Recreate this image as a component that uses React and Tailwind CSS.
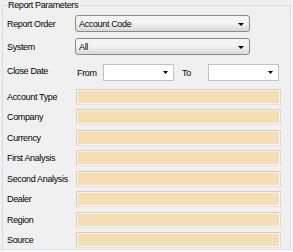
import React from 'react';

const Arrow = ({ w = 5 }) => (
  <svg width={w} height="3" viewBox={`0 0 ${w} 3`} className="shrink-0">
    <path d={`M0 0h${w}L${w / 2} 3z`} fill="#000" />
  </svg>
);

const Combo = ({ value }) => (
  <div className="w-[175px] h-[17px] flex items-center justify-between pl-[3px] pr-[5px] rounded-[3px] border border-[#8a8a8a] bg-gradient-to-b from-[#f4f4f4] from-45% to-[#d8d8d8]">
    <span>{value}</span>
    <div className="mt-[1px]"><Arrow w={6} /></div>
  </div>
);

const DateBox = () => (
  <div className="w-[71px] h-[17px] flex items-center justify-end pr-[5px] bg-white border border-[#c2c2c2]">
    <Arrow />
  </div>
);

const fields = [
  'Account Type',
  'Company',
  'Currency',
  'First Analysis',
  'Second Analysis',
  'Dealer',
  'Region',
  'Source',
];

const App = () => {
  return (
    <div
      className="w-[293px] h-[252px] bg-[#f0f0f0] pl-[2px] text-[9px] leading-[10px] tracking-[-0.35px] text-black"
      style={{ fontFamily: '"Liberation Sans", Arial, sans-serif' }}
    >
      <fieldset className="w-[289px] h-[250px] border border-[#d5dfe5] pl-[4px] shadow-[1px_1px_0_#fff]">
        <legend className="ml-[1px] pr-[1px] leading-[10px]">Report Parameters</legend>

        <div className="flex flex-col pt-[5px]">
          {/* Report Order */}
          <div className="flex items-center h-[17px]">
            <span className="w-[68px]">Report Order</span>
            <Combo value="Account Code" />
          </div>

          {/* System */}
          <div className="flex items-center h-[17px] mt-[6px]">
            <span className="w-[68px]">System</span>
            <Combo value="All" />
          </div>

          {/* Close Date */}
          <div className="flex items-center h-[17px] mt-[9px]">
            <span className="w-[70px] -mt-[4px]">Close Date</span>
            <span className="w-[26px]">From</span>
            <DateBox />
            <span className="ml-[8px] w-[26px]">To</span>
            <DateBox />
          </div>

          {/* Filter fields */}
          <div className="flex flex-col gap-[4.43px] mt-[8px]">
            {fields.map((f) => (
              <div key={f} className="flex items-center h-[16px]">
                <span className="w-[69px]">{f}</span>
                <div className="w-[205px] h-[16px] bg-[#f5deb3] border border-[#cfcfcf] border-b-[#e2e2e2] border-r-[#dadada] shadow-[inset_1px_1px_0_#fbeedb,inset_-1px_-1px_0_#fdf6ea]" />
              </div>
            ))}
          </div>
        </div>
      </fieldset>
    </div>
  );
};

export default App;
